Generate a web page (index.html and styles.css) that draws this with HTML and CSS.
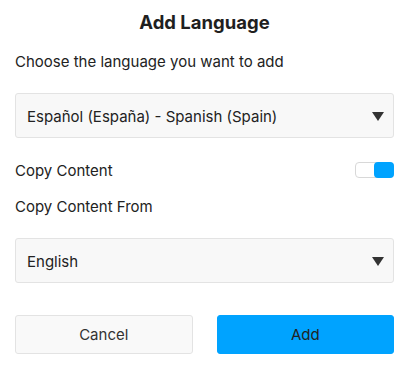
FILE: index.html
```html
<!DOCTYPE html>
<html>
<head>
<meta charset="utf-8">
<link rel="stylesheet" href="styles.css">
</head>
<body>
<div class="dialog">
  <h1 class="title">Add Language</h1>
  <div class="label label-first">Choose the language you want to add</div>
  <div class="select select-first">
    <span class="select-text">Español (España) - Spanish (Spain)</span>
    <span class="caret"></span>
  </div>
  <div class="toggle-row">
    <span class="label-inline">Copy Content</span>
    <span class="toggle"><span class="knob"></span></span>
  </div>
  <div class="label label-from">Copy Content From</div>
  <div class="select select-second">
    <span class="select-text">English</span>
    <span class="caret"></span>
  </div>
  <div class="actions">
    <button class="btn btn-cancel">Cancel</button>
    <button class="btn btn-add">Add</button>
  </div>
</div>
</body>
</html>
```

FILE: styles.css
```css
html, body {
  margin: 0;
  padding: 0;
  background: #ffffff;
}
body {
  font-family: Inter, "Noto Sans", sans-serif;
  color: #222222;
}
.dialog {
  display: flex;
  flex-direction: column;
  padding: 11px 15px 0 15px;
}
.title {
  margin: 0;
  font-size: 18.5px;
  line-height: 22px;
  font-weight: 700;
  text-align: center;
  color: #1f1f1f;
}
.label {
  font-size: 15px;
  line-height: 20px;
}
.label-first {
  margin-top: 19px;
}
.select {
  height: 45px;
  box-sizing: border-box;
  border: 1px solid #e3e3e3;
  border-radius: 3px;
  background: #f8f8f8;
  display: flex;
  align-items: center;
  justify-content: space-between;
  padding: 0 9px 0 11px;
  font-size: 15px;
}
.select-first {
  margin-top: 21px;
}
.select-second {
  margin-top: 21px;
}
.select-text {
  padding-top: 1px;
}
.caret {
  width: 0;
  height: 0;
  border-left: 6.5px solid transparent;
  border-right: 6.5px solid transparent;
  border-top: 9px solid #333333;
  margin-top: 1px;
}
.toggle-row {
  margin-top: 22px;
  height: 20px;
  display: flex;
  align-items: center;
  justify-content: space-between;
  font-size: 15px;
}
.toggle {
  width: 39px;
  height: 16px;
  box-sizing: border-box;
  border: 1px solid #d8d8d8;
  border-radius: 4px;
  background: #ffffff;
  display: flex;
  justify-content: flex-end;
  align-items: center;
  padding: 0;
}
.knob {
  width: 20px;
  height: 16px;
  margin-right: -1px;
  border-radius: 4px;
  background: #00a3ff;
}
.label-from {
  margin-top: 17px;
}
.actions {
  margin-top: 32px;
  display: flex;
  gap: 24px;
}
.btn {
  flex: 1;
  height: 39px;
  box-sizing: border-box;
  border-radius: 3px;
  font-family: Inter, "Noto Sans", sans-serif;
  font-size: 15px;
  color: #222222;
  cursor: pointer;
}
.btn-cancel {
  background: #f9f9f9;
  border: 1px solid #e3e3e3;
  color: #333333;
}
.btn-add {
  background: #00a3ff;
  border: 1px solid #00a3ff;
}
```
